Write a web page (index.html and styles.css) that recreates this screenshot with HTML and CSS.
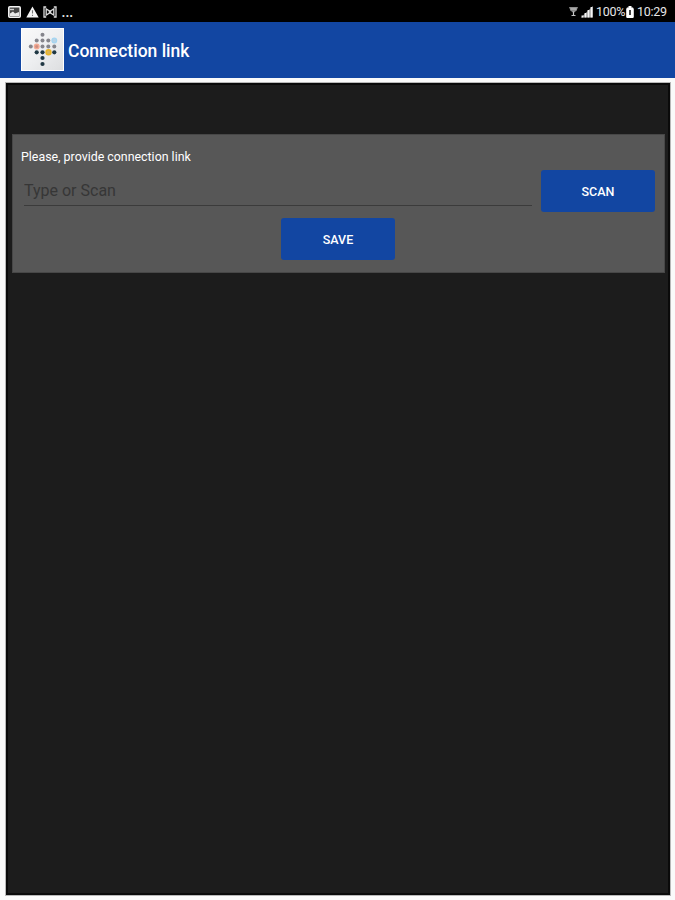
FILE: index.html
```
<!DOCTYPE html>
<html lang="en">
<head>
    <meta charset="UTF-8">
    <meta name="viewport" content="width=device-width, initial-scale=1.0">
    <title>Connection link</title>
    <link rel="stylesheet" href="styles.css">
</head>
<body>
    <div class="status-bar">
        <div class="status-left">
            <!-- Picture, warning, connection -->
            <svg width="13" height="12" viewBox="0 0 13 12">
                <rect x="0.8" y="0.8" width="11.4" height="10.4" rx="1" fill="#444" stroke="#f2f2f2" stroke-width="1.6"/>
                <path d="M2 7.5 5 5.5 7 7.5 11 6V10H2z" fill="#e8e8e8"/>
                <path d="M2 3.5h4" stroke="#ccc" stroke-width="1.4"/>
            </svg>
            <svg width="13" height="12" viewBox="0 0 13 12">
                <path d="M6.5 0.5 12.7 11.5H0.3z" fill="#f5f5f5"/>
                <path d="M6.5 4.2v3.3M6.5 8.7v1.3" stroke="#777" stroke-width="1.1"/>
            </svg>
            <svg width="14" height="12" viewBox="0 0 14 12">
                <path d="M3.2 1H1v10h2.2M10.8 1H13v10h-2.2M3.2 3v6L7 6.8 10.8 9V3L7 5.2z" fill="none" stroke="#ddd" stroke-width="1.3"/>
                <circle cx="7" cy="6" r="1.4" fill="#ddd"/>
            </svg>
            <span class="more">...</span>
        </div>
        <div class="status-right">
            <svg class="wifi" width="9" height="11" viewBox="0 0 9 11">
                <path d="M0 1h9L7.6 4.5 4.5 7 1.4 4.5z" fill="#8c8c8c"/>
                <path d="M1.6 3h5.8M4.5 5.5V10M2.5 9.5h4" stroke="#c4c4c4" stroke-width="1.2"/>
            </svg>
            <svg class="signal" width="12" height="12" viewBox="0 0 12 12">
                <path d="M0 11.5 12 0v11.5z" fill="#888"/>
                <path d="M1.5 11.5V9.5M4.5 11.5V7M7.5 11.5V4M10.5 11.5V1" stroke="#f5f5f5" stroke-width="1.9"/>
            </svg>
            <span class="battery-text">100%</span>
            <svg class="battery" width="8" height="12" viewBox="0 0 8 12">
                <path d="M2.5 0h3v1.5H7L7.8 3v8.2L7 12H1l-.8-.8V3L1 1.5h1.5z" fill="#fff"/>
                <path d="M4 4v5" stroke="#444" stroke-width="2"/>
            </svg>
            <span class="clock">10:29</span>
        </div>
    </div>

    <header class="app-bar">
        <svg class="logo" width="43" height="43" viewBox="0 0 43 43">
            <defs>
                <linearGradient id="logo-bg" x1="0" y1="0" x2="1" y2="1">
                    <stop offset="0" stop-color="#fafafa"/>
                    <stop offset="0.5" stop-color="#eeeff1"/>
                    <stop offset="1" stop-color="#dcdddf"/>
                </linearGradient>
            </defs>
            <rect width="43" height="43" fill="url(#logo-bg)"/>
            <rect x="0.5" y="0.5" width="42" height="42" fill="none" stroke="#fff"/>
            <g fill="#85858c">
                <circle cx="21.5" cy="6.7" r="2"/>
                <circle cx="15.7" cy="12.5" r="2"/>
                <circle cx="21.5" cy="12.5" r="2"/>
                <circle cx="27.3" cy="12.5" r="2"/>
                <circle cx="9.8" cy="18.5" r="2"/>
                <circle cx="21.5" cy="18.5" r="2"/>
                <circle cx="27.3" cy="18.5" r="2"/>
                <circle cx="33.3" cy="18.5" r="2"/>
            </g>
            <g fill="#203844">
                <circle cx="15.7" cy="24.3" r="2.1"/>
                <circle cx="21.5" cy="24.3" r="2.1"/>
                <circle cx="33.3" cy="24.3" r="2.1"/>
                <circle cx="21.5" cy="30" r="2.1"/>
                <circle cx="21.5" cy="36" r="2.1"/>
            </g>
            <circle cx="33.3" cy="12.5" r="2.3" fill="#b9d3e6" stroke="#a4d5f1" stroke-width="1.3"/>
            <circle cx="15.7" cy="18.5" r="2.3" fill="#cf8e80" stroke="#f3ab95" stroke-width="1.4"/>
            <circle cx="27.5" cy="24.3" r="2.4" fill="#d9b65c" stroke="#e9b429" stroke-width="1.6"/>
        </svg>
        <h1>Connection link</h1>
    </header>

    <main class="screen">
        <div class="card">
            <label class="card-label" for="link">Please, provide connection link</label>
            <div class="link-row">
                <input type="text" id="link" class="link-input" placeholder="Type or Scan">
                <button class="button">SCAN</button>
            </div>
            <button class="button save-button">SAVE</button>
        </div>
    </main>
</body>
</html>
```
FILE: styles.css
```
* {
    box-sizing: border-box;
}

body {
    margin: 0;
    height: 900px;
    display: flex;
    flex-direction: column;
    overflow: hidden;
    background-color: #fafafa;
    font-family: Roboto, "Liberation Sans", sans-serif;
}

.status-bar {
    height: 22px;
    padding: 1px 8px 0;
    display: flex;
    justify-content: space-between;
    align-items: center;
    background-color: #000;
    color: #e6e6e6;
    font-size: 12.5px;
}

.status-left,
.status-right {
    display: flex;
    align-items: center;
}

.status-left {
    gap: 4.5px;
}

.more {
    font-size: 14px;
    line-height: 14px;
    font-weight: 500;
}

.signal {
    margin: 0 3px;
}

.battery-text {
    width: 29px;
    letter-spacing: -0.3px;
}

.battery {
    margin: 0 3px 0 1px;
}

.clock {
    width: 30px;
    letter-spacing: -0.3px;
}

.app-bar {
    height: 56px;
    padding: 0 21px 1px;
    display: flex;
    align-items: center;
    gap: 4px;
    background-color: #1246a2;
}

.app-bar h1 {
    margin: 2px 0 0;
    color: #fff;
    font-size: 17.5px;
    font-weight: 500;
}

.screen {
    flex: 1;
    margin: 5px 5px 5px 6px;
    padding: 49px 4px 0;
    border: 2px solid #0a0a0a;
    outline: 1px solid #b8b8b8;
    outline-offset: -0.5px;
    background-color: #1c1c1c;
}

.card {
    height: 139px;
    margin-right: -1px;
    padding: 14px 9px 0 8px;
    display: flex;
    flex-direction: column;
    border: 1px solid #474747;
    background-color: #575757;
}

.card-label {
    height: 21px;
    color: #fff;
    font-size: 12.4px;
    line-height: 16px;
}

.link-row {
    display: flex;
    gap: 9px;
}

.link-input {
    flex: 1;
    height: 36px;
    margin-left: 3px;
    padding: 5px 0 0;
    border: none;
    border-bottom: 1px solid #3b3b3b;
    background: transparent;
    color: #fff;
    font-family: inherit;
    font-size: 16px;
    outline: none;
}

.link-input::placeholder {
    color: #363636;
    opacity: 1;
}

.button {
    width: 114px;
    height: 42px;
    padding: 0;
    border: none;
    border-radius: 3px;
    background-color: #1246a2;
    color: #fff;
    font-family: inherit;
    font-size: 12.5px;
    font-weight: 500;
}

.save-button {
    align-self: center;
    margin-top: 6px;
}
```
